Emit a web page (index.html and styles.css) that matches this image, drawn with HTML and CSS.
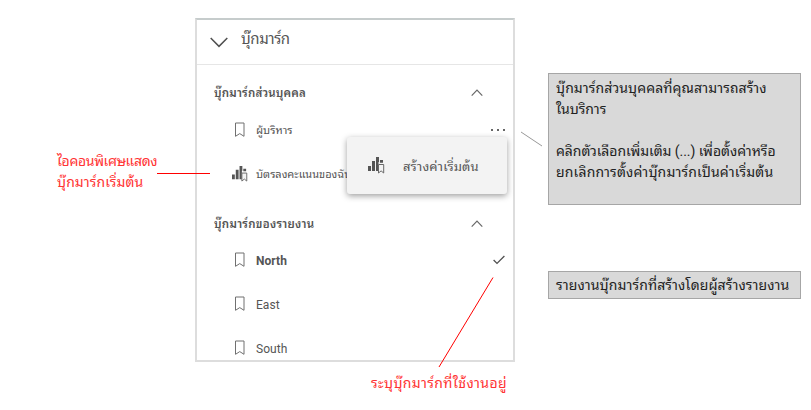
FILE: index.html
```html
<!DOCTYPE html>
<html lang="th">
<head>
<meta charset="utf-8">
<title>บุ๊กมาร์ก</title>
<link rel="stylesheet" href="styles.css">
</head>
<body>
<svg class="defs" width="0" height="0" aria-hidden="true">
  <symbol id="bookmark" viewBox="0 0 12 16"><path d="M1.5 1h8.5v13.3L5.75 11.6 1.5 14.3z" fill="none" stroke="#707070" stroke-width="1"/></symbol>
  <symbol id="default-mark" viewBox="0 0 17 17"><path d="M0 9h3v5H0zM4 4h3v10H4zM8 0h3v5h-.5v9H8zM12 3h3v2.7h-3z" fill="#555"/><path d="M10.5 7.5h5.2v8.5l-2.6-2.1-2.6 2.1z" fill="#f3f3f3" stroke="#686868" stroke-width="1"/></symbol>
  <symbol id="up" viewBox="0 0 12 8"><path d="M.7 6.6 6 1.2l5.3 5.4" fill="none" stroke="#686868" stroke-width="1.2"/></symbol>
</svg>
<main class="stage">
  <p class="callout callout-left"><span class="t-l1">ไอคอนพิเศษแสดง</span><br><span class="t-l2">บุ๊กมาร์กเริ่มต้น</span></p>
  <section class="center">
    <div class="panel">
      <header class="title"><svg width="18" height="11" viewBox="0 0 18 11"><path d="M.7 1 9 9.4 17.3 1" fill="none" stroke="#505050" stroke-width="1.5"/></svg><h1>บุ๊กมาร์ก</h1></header>
      <div class="group"><h2 class="t-g1">บุ๊กมาร์กส่วนบุคคล</h2><svg width="12" height="8"><use href="#up"/></svg></div>
      <div class="row"><svg class="icon" width="12" height="16"><use href="#bookmark"/></svg><span class="thai t-r1">ผู้บริหาร</span><span class="dots"><i></i><i></i><i></i></span></div>
      <div class="row"><svg class="icon wide" width="16" height="16"><use href="#default-mark"/></svg><span class="thai t-r2">บัตรลงคะแนนของฉัน</span></div>
      <div class="group second"><h2 class="t-g2">บุ๊กมาร์กของรายงาน</h2><svg width="12" height="8"><use href="#up"/></svg></div>
      <div class="row active"><svg class="icon" width="12" height="16"><use href="#bookmark"/></svg><span class="latin">North</span><svg class="check" width="12" height="10" viewBox="0 0 12 10"><path d="M.6 5 4 8.4 11.4 1" fill="none" stroke="#505050" stroke-width="1.3"/></svg></div>
      <div class="row"><svg class="icon" width="12" height="16"><use href="#bookmark"/></svg><span class="latin">East</span></div>
      <div class="row"><svg class="icon" width="12" height="16"><use href="#bookmark"/></svg><span class="latin">South</span></div>
    </div>
    <p class="callout callout-bottom"><span class="t-b">ระบุบุ๊กมาร์กที่ใช้งานอยู่</span></p>
    <div class="menu"><svg width="17" height="17"><use href="#default-mark"/></svg><span class="t-m">สร้างค่าเริ่มต้น</span></div>
  </section>
  <aside class="notes">
    <div class="note note-large"><p><span class="t-n1">บุ๊กมาร์กส่วนบุคคลที่คุณสามารถสร้าง</span><br><span class="t-n2">ในบริการ</span></p><p><span class="t-n3">คลิกตัวเลือกเพิ่มเติม (...) เพื่อตั้งค่าหรือ</span><br><span class="t-n4">ยกเลิกการตั้งค่าบุ๊กมาร์กเป็นค่าเริ่มต้น</span></p></div>
    <div class="note note-small"><p><span class="t-n5">รายงานบุ๊กมาร์กที่สร้างโดยผู้สร้างรายงาน</span></p></div>
  </aside>
  <svg class="connectors" width="811" height="410"><path d="M157 173.5h53M493 277.5 439 367" stroke="#f00" fill="none"/><path d="m521 132 21 14" stroke="#999" fill="none"/></svg>
</main>
</body>
</html>
```
FILE: styles.css
```css
* { box-sizing: border-box; }
body { margin: 0; background: #fff; font-family: Roboto, "Noto Sans Thai Looped", Loma, Garuda, Waree, "Noto Sans Thai", "Noto Sans", sans-serif; color: #555; }
h1, h2, p { margin: 0; font-weight: 400; }
svg { display: block; flex: none; }
.defs { position: absolute; }
.stage { position: relative; display: flex; width: 811px; height: 410px; overflow: hidden; }
.stage span { white-space: nowrap; }
.callout { color: #f33; font-size: 14px; line-height: 21px; }
.callout-left { width: 195px; padding: 151px 0 0 57px; flex: none; }
.center { position: relative; width: 320px; padding-top: 18px; flex: none; }
.panel { height: 344px; border: 2px solid #ddd; border-top-color: #c6cccc; overflow: hidden; display: flex; flex-direction: column; }
.title { height: 45px; flex: none; display: flex; align-items: center; border-bottom: 1px solid #e6e6e6; padding: 0 0 7px 13px; gap: 13px; }
.title svg { margin-top: 7px; }
.title h1 { font-size: 15px; line-height: 20px; letter-spacing: -.4px; white-space: nowrap; }
.group { height: 43px; flex: none; display: flex; align-items: center; justify-content: space-between; padding: 12px 30px 0 17px; }
.group.second { height: 42px; padding-top: 13px; }
.group h2 { font-size: 11.5px; font-weight: 600; line-height: 16px; white-space: nowrap; }
.row { height: 44px; flex: none; display: flex; align-items: center; padding: 0 8px 0 37px; font-size: 12px; }
.icon { margin-right: 10px; }
.icon.wide { margin: 0 8px 0 -2px; }
.thai { font-size: 11px; padding-bottom: 2px; }
.latin { padding-top: 1px; letter-spacing: .05px; }
.active { font-weight: 700; }
.check { margin-left: auto; }
.dots { margin-left: auto; display: flex; gap: 4px; }
.dots i { width: 2px; height: 2px; background: #333; border-radius: 1px; }
.menu { position: absolute; left: 152px; top: 137px; width: 160px; height: 57px; border-radius: 3px; background: #f3f3f3; box-shadow: 0 2px 6px rgba(0,0,0,.38); display: flex; align-items: center; padding: 0 0 0 21px; gap: 18px; font-size: 13px; }
.callout-bottom { padding: 11px 0 0 176px; }
.notes { margin-left: 33px; padding-top: 73px; width: 253px; flex: none; display: flex; flex-direction: column; gap: 66px; }
.note { background: #d9d9d9; border: 1px solid #a6a6a6; color: #222; font-size: 14px; line-height: 21px; padding: 4px 0 0 7px; }
.note-large { height: 132px; display: flex; flex-direction: column; gap: 21px; }
.note-small { height: 28px; padding-top: 3px; }
.connectors { position: absolute; left: 0; top: 0; }
.t-l1 { letter-spacing: -.36px; }
.t-l2 { letter-spacing: .1px; }
.t-g1 { letter-spacing: .18px; }
.t-g2 { letter-spacing: .25px; }
.t-m { letter-spacing: .12px; }
.t-b { letter-spacing: .36px; }
.t-n1 { letter-spacing: .1px; }
.t-n3 { letter-spacing: -.05px; }
.t-n4 { letter-spacing: .17px; }
.t-n5 { letter-spacing: .1px; }
```
